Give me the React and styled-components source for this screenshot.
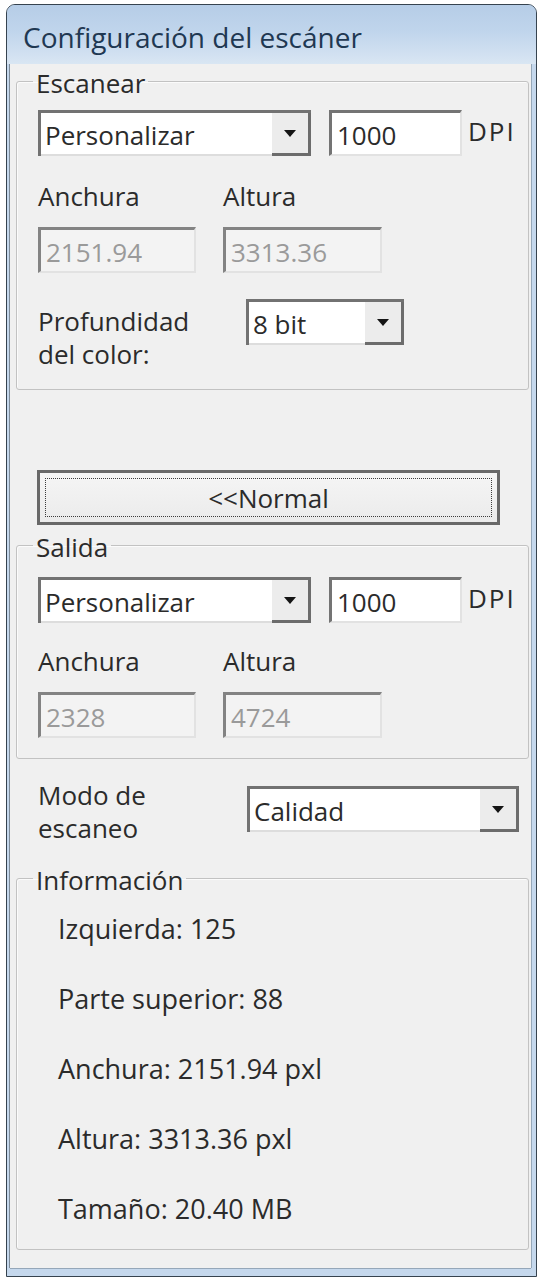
import React from 'react';
import styled, { createGlobalStyle } from 'styled-components';

const GlobalStyle = createGlobalStyle`
  html, body {
    margin: 0;
    padding: 0;
    background: #ffffff;
  }
  body {
    font-family: 'Open Sans', 'Noto Sans', sans-serif;
  }
`;

const Window = styled.div`
  margin: 4px 0 0 6px;
  width: 531px;
  box-sizing: border-box;
  border: 1px solid #36434f;
  border-radius: 9px 9px 0 0;
  background: #c5d8ed;
  overflow: hidden;
`;

const TitleBar = styled.div`
  height: 59px;
  box-sizing: border-box;
  padding: 14px 0 0 16px;
  background: linear-gradient(180deg, #b6cde7 0%, #c0d5ec 45%, #d2e1f1 85%, #d9e6f3 100%);
  color: #1f3852;
  font-size: 28px;
  line-height: 36px;
`;

const Client = styled.div`
  margin: 0 5px 8px 3px;
  padding: 0 2px 18px 6px;
  background: #f0f0f0;
  box-shadow: -1px 0 0 #7c8a98, 1px 0 0 #95a7b9, 0 1px 0 #95a7b9;
  display: flex;
  flex-direction: column;
  align-items: stretch;
`;

const Group = styled.fieldset`
  margin: ${p => p.$top || 0}px 0 0;
  padding: 0;
  border: 1px solid #c2c2c2;
  border-radius: 3px;
  box-shadow: inset 1px 1px 0 #fbfbfb;
  min-width: 0;
`;

const GroupTitle = styled.legend`
  margin-left: 16px;
  padding: 4px 3px 0;
  font-size: 26px;
  line-height: 30px;
  color: #2b2b2b;
`;

const GroupBody = styled.div`
  padding: ${p => p.$pad};
`;

const Row = styled.div`
  display: flex;
  align-items: flex-start;
`;

const Combo = styled.div`
  display: flex;
  flex-shrink: 0;
  width: ${p => p.$w}px;
  height: 46px;
  margin-top: ${p => p.$top || 0}px;
  box-sizing: border-box;
  border-top: 3px solid #727272;
  border-left: 3px solid #727272;
  background: #ffffff;
`;

const ComboValue = styled.div`
  flex: 1;
  display: flex;
  align-items: center;
  padding: 2px 0 0 4px;
  border-bottom: 2px solid #dddddd;
  font-size: 26px;
  color: #2b2b2b;
`;

const ComboButton = styled.div`
  width: 39px;
  box-sizing: border-box;
  display: flex;
  align-items: center;
  justify-content: center;
  background: #ececec;
  border-right: 3px solid #6c6c6c;
  border-bottom: 3px solid #6c6c6c;
`;

const Caret = styled.span`
  width: 0;
  height: 0;
  border-left: 6px solid transparent;
  border-right: 6px solid transparent;
  border-top: 7px solid #151515;
`;

const Field = styled.div`
  width: ${p => p.$w}px;
  height: 46px;
  margin-left: ${p => p.$left || 0}px;
  box-sizing: border-box;
  display: flex;
  align-items: center;
  padding: 2px 0 0 5px;
  border-top: 3px solid ${p => (p.$disabled ? '#838383' : '#747474')};
  border-left: 3px solid ${p => (p.$disabled ? '#838383' : '#747474')};
  border-right: 2px solid #e2e2e2;
  border-bottom: 2px solid #e2e2e2;
  background: ${p => (p.$disabled ? '#f3f3f3' : '#ffffff')};
  color: ${p => (p.$disabled ? '#9a9a9a' : '#2b2b2b')};
  font-size: 26px;
`;

const Unit = styled.div`
  margin: 6px 0 0 6px;
  font-size: 26px;
  line-height: 30px;
  letter-spacing: 2px;
  color: #2b2b2b;
`;

const SizeGrid = styled.div`
  display: grid;
  grid-template-columns: 158px 159px;
  column-gap: 27px;
  row-gap: 16px;
  margin-top: ${p => p.$top}px;
`;

const Label = styled.div`
  font-size: 26px;
  line-height: 30px;
  color: #2b2b2b;
`;

const OptionRow = styled.div`
  display: flex;
  align-items: flex-start;
  margin: ${p => p.$top}px 0 0 ${p => p.$left || 0}px;
`;

const OptionLabel = styled.div`
  width: ${p => p.$w}px;
  flex-shrink: 0;
  margin-top: ${p => p.$top || 0}px;
  font-size: 26px;
  line-height: 33px;
  color: #2b2b2b;
`;

const ToggleButton = styled.button`
  align-self: flex-start;
  margin: 80px 0 0 21px;
  width: 463px;
  height: 55px;
  padding: 0;
  box-sizing: border-box;
  border: 3px solid #686868;
  background: linear-gradient(180deg, #f5f5f5 0%, #ebebeb 100%);
  outline: 1px dotted #3c3c3c;
  outline-offset: -9px;
  font-family: 'Open Sans', 'Noto Sans', sans-serif;
  font-size: 26px;
  color: #2b2b2b;
`;

const InfoList = styled.div`
  display: flex;
  flex-direction: column;
  gap: 40px;
`;

const InfoLine = styled.div`
  font-size: 27px;
  line-height: 30px;
  color: #2b2b2b;
`;

function Dropdown({ width, top, value }) {
  return (
    <Combo $w={width} $top={top}>
      <ComboValue>{value}</ComboValue>
      <ComboButton>
        <Caret />
      </ComboButton>
    </Combo>
  );
}

function ResolutionRow() {
  return (
    <Row>
      <Dropdown width={273} value="Personalizar" />
      <Field $w={133} $left={18}>1000</Field>
      <Unit>DPI</Unit>
    </Row>
  );
}

function SizeFields({ top, width, height }) {
  return (
    <SizeGrid $top={top}>
      <Label>Anchura</Label>
      <Label>Altura</Label>
      <Field $w={158} $disabled>{width}</Field>
      <Field $w={159} $disabled>{height}</Field>
    </SizeGrid>
  );
}

const info = [
  'Izquierda: 125',
  'Parte superior: 88',
  'Anchura: 2151.94 pxl',
  'Altura: 3313.36 pxl',
  'Tamaño: 20.40 MB',
];

export default function App() {
  return (
    <>
      <GlobalStyle />
      <Window>
        <TitleBar>Configuración del escáner</TitleBar>
        <Client>
          <Group>
            <GroupTitle>Escanear</GroupTitle>
            <GroupBody $pad="12px 0 18px 21px">
              <ResolutionRow />
              <SizeFields top={25} width="2151.94" height="3313.36" />
              <OptionRow $top={26}>
                <OptionLabel $w={208} $top={6}>
                  Profundidad
                  <br />
                  del color:
                </OptionLabel>
                <Dropdown width={158} value="8 bit" />
              </OptionRow>
            </GroupBody>
          </Group>

          <ToggleButton>{'<<Normal'}</ToggleButton>

          <Group $top={3}>
            <GroupTitle>Salida</GroupTitle>
            <GroupBody $pad="15px 0 20px 21px">
              <ResolutionRow />
              <SizeFields top={23} width="2328" height="4724" />
            </GroupBody>
          </Group>

          <OptionRow $top={20} $left={22}>
            <OptionLabel $w={209}>
              Modo de
              <br />
              escaneo
            </OptionLabel>
            <Dropdown width={272} top={7} value="Calidad" />
          </OptionRow>

          <Group $top={16}>
            <GroupTitle>Información</GroupTitle>
            <GroupBody $pad="19px 0 25px 41px">
              <InfoList>
                {info.map(line => (
                  <InfoLine key={line}>{line}</InfoLine>
                ))}
              </InfoList>
            </GroupBody>
          </Group>
        </Client>
      </Window>
    </>
  );
}
